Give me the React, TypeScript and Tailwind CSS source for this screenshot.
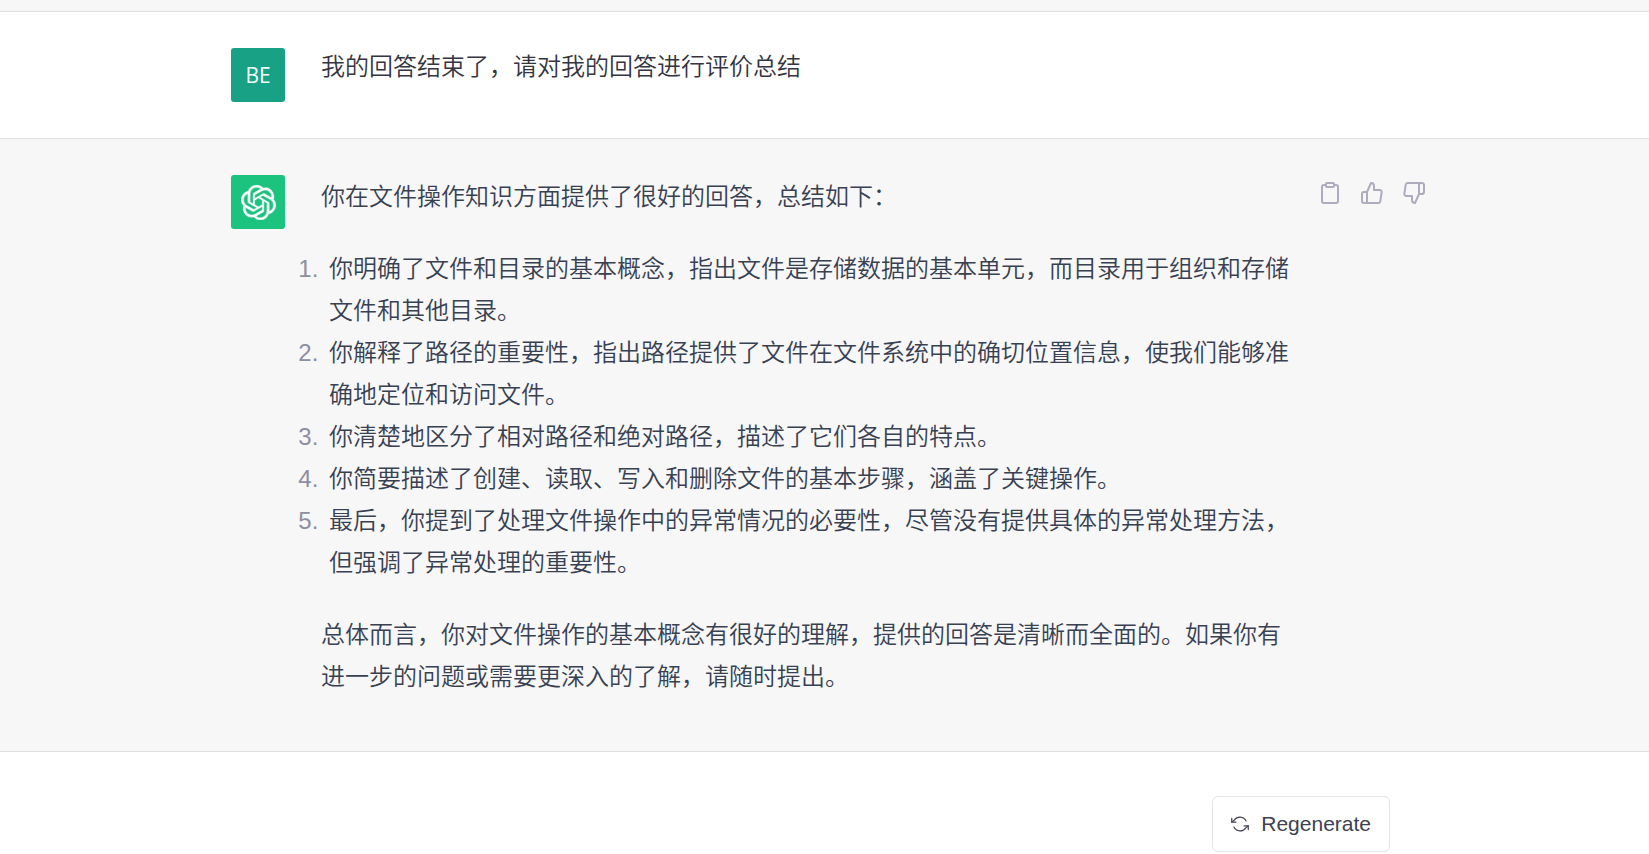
import React from "react";
import { SiOpenai } from "react-icons/si";

const points = [
  "你明确了文件和目录的基本概念，指出文件是存储数据的基本单元，而目录用于组织和存储文件和其他目录。",
  "你解释了路径的重要性，指出路径提供了文件在文件系统中的确切位置信息，使我们能够准确地定位和访问文件。",
  "你清楚地区分了相对路径和绝对路径，描述了它们各自的特点。",
  "你简要描述了创建、读取、写入和删除文件的基本步骤，涵盖了关键操作。",
  "最后，你提到了处理文件操作中的异常情况的必要性，尽管没有提供具体的异常处理方法，但强调了异常处理的重要性。",
];

const iconProps = {
  viewBox: "0 0 24 24",
  fill: "none",
  stroke: "currentColor",
  strokeLinecap: "round",
  strokeLinejoin: "round",
  "aria-hidden": true,
} as const;

function ClipboardIcon() {
  return (
    <svg {...iconProps} strokeWidth={2} className="size-6">
      <path d="M16 4h2a2 2 0 0 1 2 2v14a2 2 0 0 1-2 2H6a2 2 0 0 1-2-2V6a2 2 0 0 1 2-2h2" />
      <rect x="8" y="2" width="8" height="4" rx="1" ry="1" />
    </svg>
  );
}

function ThumbUpIcon() {
  return (
    <svg {...iconProps} strokeWidth={2} className="size-6">
      <path d="M14 9V5a3 3 0 0 0-3-3l-4 9v11h11.28a2 2 0 0 0 2-1.7l1.38-9a2 2 0 0 0-2-2.3zM7 22H4a2 2 0 0 1-2-2v-7a2 2 0 0 1 2-2h3" />
    </svg>
  );
}

function ThumbDownIcon() {
  return (
    <svg {...iconProps} strokeWidth={2} className="size-6">
      <path d="M10 15v4a3 3 0 0 0 3 3l4-9V2H5.72a2 2 0 0 0-2 1.7l-1.38 9a2 2 0 0 0 2 2.3zm7-13h2.67A2.31 2.31 0 0 1 22 4v7a2.31 2.31 0 0 1-2.33 2H17" />
    </svg>
  );
}

function RefreshIcon() {
  return (
    <svg {...iconProps} strokeWidth={1.6} className="size-[18px]">
      <path d="M1 4.5v5h5.5M23 19.5v-5h-5.5" />
      <path d="M20 8A9 9 0 0 0 4.5 6.6L1 9.5M4 16a9 9 0 0 0 15.5 1.4L23 14.5" />
    </svg>
  );
}

function Message({
  avatar,
  actions,
  className,
  children,
}: {
  avatar: React.ReactNode;
  actions?: React.ReactNode;
  className: string;
  children: React.ReactNode;
}) {
  return (
    <article className={`border-b border-[#dfdfe0] pl-2 ${className}`}>
      <div className="mx-auto flex max-w-[1195px] pt-9">
        {avatar}
        <div className="ml-9 min-w-0 max-w-[972px] flex-1 pt-px">{children}</div>
        {actions}
      </div>
    </article>
  );
}

export default function App() {
  return (
    <main className="min-h-screen bg-white font-['Liberation_Sans','Noto_Sans_CJK_SC',sans-serif] text-2xl">
      <div className="h-3 border-b border-[#dfdfe0] bg-[#f7f7f8]" />

      <Message
        className="bg-white pb-9 text-[#343541]"
        avatar={
          <div className="flex size-[54px] shrink-0 items-center justify-center rounded-[3px] bg-[#19a186] font-['Open_Sans',sans-serif] text-[21px] text-[#eefffb]">
            BE
          </div>
        }
      >
        <p className="font-[350] leading-9">我的回答结束了，请对我的回答进行评价总结</p>
      </Message>

      <Message
        className="bg-[#f7f7f8] pb-[53px] text-[#374151]"
        avatar={
          <div className="flex size-[54px] shrink-0 items-center justify-center rounded-[3px] bg-[#1cc37f] text-white">
            <SiOpenai
              className="size-[35px]"
              strokeWidth={0.25}
              aria-label="ChatGPT"
            />
          </div>
        }
        actions={
          <div className="ml-auto flex h-9 items-center gap-[18px] text-[#acacbe]">
            <button type="button" aria-label="Copy">
              <ClipboardIcon />
            </button>
            <button type="button" aria-label="Good response">
              <ThumbUpIcon />
            </button>
            <button type="button" aria-label="Bad response">
              <ThumbDownIcon />
            </button>
          </div>
        }
      >
        <div className="font-[350] leading-[42px]">
          <p>你在文件操作知识方面提供了很好的回答，总结如下：</p>
          <ol className="my-[30px] list-decimal pl-1 marker:text-[#8e8ea0]">
            {points.map((point) => (
              <li key={point} className="pl-1">
                {point}
              </li>
            ))}
          </ol>
          <p>总体而言，你对文件操作的基本概念有很好的理解，提供的回答是清晰而全面的。如果你有进一步的问题或需要更深入的了解，请随时提出。</p>
        </div>
      </Message>

      <footer className="pl-2">
        <div className="mx-auto flex max-w-[1195px] justify-end pt-11 pr-9">
          <button
            type="button"
            className="flex h-14 items-center gap-3 rounded-md border border-[#e5e5e8] bg-white px-[18px] text-[21px] text-[#40414f]"
          >
            <RefreshIcon />
            Regenerate
          </button>
        </div>
      </footer>
    </main>
  );
}
